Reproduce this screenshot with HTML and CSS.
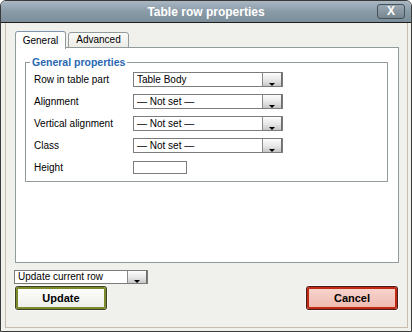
FILE: index.html
```html
<!DOCTYPE html>
<html lang="en">
<head>
  <meta charset="UTF-8">
  <title>Table row properties</title>
  <link rel="stylesheet" href="styles.css">
</head>
<body>
  <div class="window">
    <div class="titlebar">
      <span class="title">Table row properties</span>
      <span class="close">X</span>
    </div>
    <div class="frame">
      <div class="tabs">
        <span class="tab active">General</span>
        <span class="tab">Advanced</span>
      </div>
      <div class="panel">
        <fieldset>
          <legend>General properties</legend>
          <div class="form">
            <label>Row in table part</label>
            <div class="select"><span>Table Body</span><i class="arrow"></i></div>
            <label>Alignment</label>
            <div class="select"><span>— Not set —</span><i class="arrow"></i></div>
            <label>Vertical alignment</label>
            <div class="select"><span>— Not set —</span><i class="arrow"></i></div>
            <label>Class</label>
            <div class="select"><span>— Not set —</span><i class="arrow"></i></div>
            <label>Height</label>
            <div class="field"><span class="input"></span></div>
          </div>
        </fieldset>
      </div>
      <div class="select action"><span>Update current row</span><i class="arrow"></i></div>
      <div class="buttons">
        <button class="btn update">Update</button>
        <button class="btn cancel">Cancel</button>
      </div>
    </div>
  </div>
</body>
</html>
```

FILE: styles.css
```css
body {
  margin: 0;
  font-family: "Liberation Sans", Arial, sans-serif;
  font-size: 10px;
  color: #000;
  background: #fff;
}

.window {
  width: 412px;
  height: 332px;
  box-sizing: border-box;
  border: 1px solid #3a3a3a;
  border-radius: 6px 6px 0 0;
  background: #f0f0ec;
  display: flex;
  flex-direction: column;
  overflow: hidden;
}

.titlebar {
  height: 21px;
  border-bottom: 1px solid #1e1e1e;
  background: linear-gradient(#a9b7c2, #8a9ba8 50%, #7d8e9b);
  display: grid;
  grid-template-columns: 1fr auto 1fr;
  align-items: center;
}

.title {
  grid-column: 2;
  color: #fff;
  font-size: 12px;
  font-weight: bold;
}

.close {
  grid-column: 3;
  justify-self: end;
  margin-right: 6px;
  width: 26px;
  height: 13px;
  border: 1px solid #45525c;
  border-radius: 3px;
  background: linear-gradient(#9aa8b3, #76868f);
  color: #fff;
  font-size: 12px;
  font-weight: bold;
  line-height: 13px;
  text-align: center;
}

.frame {
  flex: 1;
  margin: 0 3px 3px 4px;
  border: 1px solid #c8bcaf;
  border-top: none;
  padding: 9px 8px 0 9px;
}

.tabs {
  display: flex;
  gap: 2px;
  height: 16px;
  margin-bottom: -1px;
}

.tab {
  box-sizing: border-box;
  width: 61px;
  height: 16px;
  border: 1px solid #919b9c;
  border-radius: 3px 3px 0 0;
  background: linear-gradient(#fbfbf9, #ecebe6);
  line-height: 14px;
  text-align: center;
}

.tab.active {
  position: relative;
  z-index: 1;
  width: 51px;
  height: 18px;
  margin-top: -1px;
  border-top-color: #8196ac;
  border-bottom: none;
  background: #fff;
  line-height: 17px;
}

.panel {
  height: 216px;
  box-sizing: border-box;
  border: 1px solid #919b9c;
  background: #fff;
  padding: 8px 10px 0 9px;
}

fieldset {
  margin: 0;
  border: 1px solid #919b9c;
  padding: 0 8px 3px;
}

legend {
  margin-left: -4px;
  padding: 0 2px;
  color: #2a68b2;
  font-size: 10.5px;
  font-weight: bold;
  line-height: 12px;
}

.form {
  display: grid;
  grid-template-columns: 99px auto;
  grid-auto-rows: 22px;
  align-items: center;
}

.select {
  display: flex;
  width: 150px;
  height: 15px;
  box-sizing: border-box;
  border: 1px solid #7c7c7c;
  background: #fff;
}

.select span {
  flex: 1;
  padding-left: 3px;
  line-height: 13px;
  white-space: nowrap;
}

.arrow {
  position: relative;
  width: 18px;
  border-left: 1px solid #8a8a8a;
  border-right: 1px solid #6c6c6c;
  background: linear-gradient(#fdfdfd, #e6e6e6 55%, #c6c6c6);
}

.arrow::after {
  content: "";
  position: absolute;
  left: 6px;
  bottom: 0;
  border-left: 3px solid transparent;
  border-right: 3px solid transparent;
  border-top: 3px solid #000;
}

.input {
  display: block;
  width: 54px;
  height: 13px;
  box-sizing: border-box;
  border: 1px solid #7c7c7c;
}

.action {
  width: 134px;
  height: 14px;
  margin: 7px 0 0 -1px;
}

.action span {
  line-height: 12px;
}

.buttons {
  display: flex;
  justify-content: space-between;
  margin: 3px 2px 0 1px;
}

.btn {
  width: 90px;
  height: 22px;
  font-family: inherit;
  font-size: 11px;
  font-weight: bold;
  color: #000;
  border-radius: 2px;
  padding: 0;
}

.update {
  border: 2px solid #7b8a2c;
  background: linear-gradient(#fdfdfb, #eeeeea);
  box-shadow: 0 0 0 1px #3d4222, 0 0 0 2px #fafafa;
}

.cancel {
  border: 2px solid #c22a15;
  background: linear-gradient(#f7d3cc, #efbcb2);
  box-shadow: 0 0 0 1px #4a1d14, 0 0 0 2px #fafafa;
}
```
